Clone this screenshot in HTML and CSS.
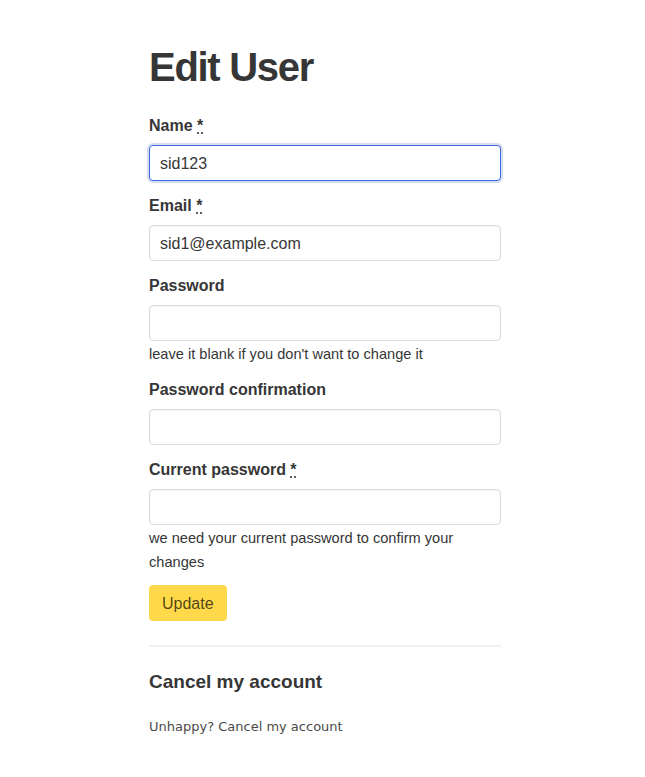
FILE: index.html
```html
<!DOCTYPE html>
<html>
<head>
<meta charset="utf-8">
<title>Edit User</title>
<link rel="stylesheet" href="styles.css">
</head>
<body>
<section class="page">
  <h2 class="title">Edit User</h2>
  <form class="form">
    <div class="field">
      <label class="label">Name <abbr title="required">*</abbr></label>
      <input class="input is-focused" type="text" value="sid123">
    </div>
    <div class="field">
      <label class="label">Email <abbr title="required">*</abbr></label>
      <input class="input" type="email" value="sid1@example.com">
    </div>
    <div class="field">
      <label class="label">Password</label>
      <input class="input" type="password" value="">
      <p class="help">leave it blank if you don't want to change it</p>
    </div>
    <div class="field">
      <label class="label">Password confirmation</label>
      <input class="input" type="password" value="">
    </div>
    <div class="field">
      <label class="label">Current password <abbr title="required">*</abbr></label>
      <input class="input" type="password" value="">
      <p class="help">we need your current password to confirm your changes</p>
    </div>
    <div class="actions">
      <button class="button is-warning" type="button">Update</button>
    </div>
  </form>
  <hr class="divider">
  <h3 class="subtitle">Cancel my account</h3>
  <p class="cancel">Unhappy? <a class="cancel-link" href="#">Cancel my account</a></p>
</section>
</body>
</html>
```
FILE: styles.css
```css
html, body {
  margin: 0;
  padding: 0;
  background: #fff;
}
body {
  font-family: "Liberation Sans", Arial, sans-serif;
  color: #363636;
  font-size: 16px;
  line-height: 1.5;
}
.page {
  width: 352px;
  margin-left: 149px;
  padding-top: 45px;
}
.title {
  margin: 0 0 23px;
  font-size: 40px;
  line-height: 45px;
  font-weight: 700;
  letter-spacing: -1.3px;
  color: #363636;
}
.form {
  display: flex;
  flex-direction: column;
}
.field {
  display: flex;
  flex-direction: column;
  margin-bottom: 12px;
}
.label {
  display: block;
  font-weight: 700;
  font-size: 16px;
  line-height: 24px;
  padding-top: 1px;
  margin-bottom: 7px;
  color: #363636;
}
.label abbr {
  text-decoration: underline dotted;
  text-underline-offset: 2px;
}
.input {
  box-sizing: border-box;
  width: 100%;
  height: 36px;
  padding: 2px 10px 0;
  border: 1px solid #dbdbdb;
  border-radius: 4px;
  font-family: "Liberation Sans", Arial, sans-serif;
  font-size: 16px;
  color: #363636;
  background: #fff;
  box-shadow: inset 0 1px 2px rgba(10, 10, 10, 0.05);
  outline: none;
}
.input.is-focused {
  border-color: #3b6ae0;
  box-shadow: 0 0 0 2px rgba(72, 95, 199, 0.22);
}
.help {
  margin: 0 0 -1px;
  padding-top: 1px;
  font-size: 14.6px;
  line-height: 24px;
  color: #363636;
}
.actions {
  display: flex;
}
.button {
  height: 36px;
  padding: 1px 13px 0;
  border: none;
  border-radius: 4px;
  font-family: "Liberation Sans", Arial, sans-serif;
  font-size: 16px;
  cursor: pointer;
}
.button.is-warning {
  background: #ffd94a;
  color: rgba(0, 0, 0, 0.7);
}
.divider {
  height: 2px;
  margin: 24px 0 21px;
  border: none;
  background: #f1f1f1;
}
.subtitle {
  margin: 0 0 21px;
  font-size: 19px;
  line-height: 28px;
  font-weight: 700;
  color: #363636;
}
.cancel {
  margin: 0;
  font-family: "DejaVu Sans", Verdana, sans-serif;
  font-size: 13px;
  line-height: 20px;
  color: #4a4a4a;
}
.cancel-link {
  color: #4a4a4a;
  text-decoration: none;
}
```
